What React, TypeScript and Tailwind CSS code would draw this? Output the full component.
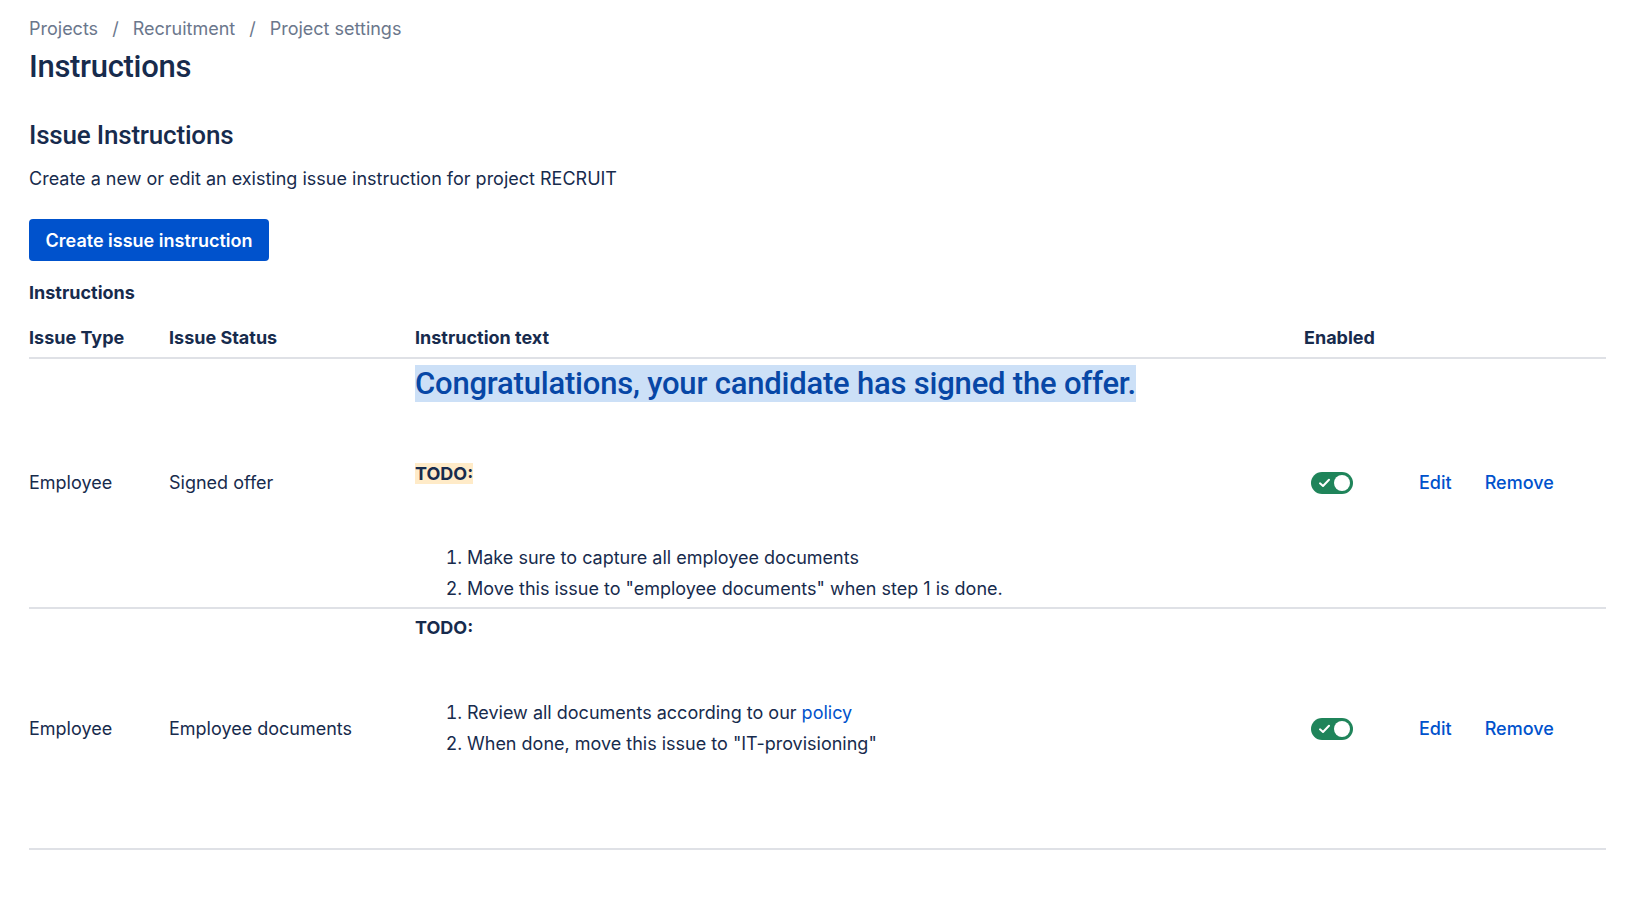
import React from "react";

const Toggle = () => (
  <div className="relative ml-[7px] flex h-[22px] w-[42px] items-center rounded-full bg-[#1f845a]">
    <svg
      className="absolute left-[7px] top-[5px]"
      width="13"
      height="12"
      viewBox="0 0 13 12"
      fill="none"
    >
      <path
        d="M2 6.3 L5 9 L11 2.8"
        stroke="white"
        strokeWidth="2"
        strokeLinecap="round"
        strokeLinejoin="round"
      />
    </svg>
    <span className="absolute right-[3px] top-[3px] h-[16px] w-[16px] rounded-full bg-white"></span>
  </div>
);

const Actions = () => (
  <div className="flex items-center gap-[33px] text-[18px] font-medium text-[#0052cc]">
    <a className="cursor-pointer">Edit</a>
    <a className="cursor-pointer">Remove</a>
  </div>
);

const headingFont = { fontFamily: "Roboto, 'Liberation Sans', sans-serif" };

const App = () => {
  return (
    <div
      className="min-h-screen bg-white pl-[29px] pr-[41px] pt-[17px] text-[#172b4d]"
      style={{ fontFamily: "Inter, 'Liberation Sans', sans-serif" }}
    >
      <div className="flex items-center text-[18px] leading-[24px] text-[#6b778c]">
        <span>Projects</span>
        <span className="mx-[14px]">/</span>
        <span>Recruitment</span>
        <span className="mx-[14px]">/</span>
        <span>Project settings</span>
      </div>

      <h1
        className="mt-[8px] text-[31px] font-medium leading-[36px] tracking-[-0.3px]"
        style={headingFont}
      >
        Instructions
      </h1>

      <h2
        className="mt-[34px] text-[26px] font-medium leading-[32px] tracking-[-0.2px]"
        style={headingFont}
      >
        Issue Instructions
      </h2>

      <p className="mt-[16px] text-[18px] leading-[24px]">
        Create a new or edit an existing issue instruction for project RECRUIT
      </p>

      <button className="mt-[28px] flex h-[42px] w-[240px] items-center justify-center rounded-[4px] bg-[#0052cc] text-[18px] font-semibold text-white">
        Create issue instruction
      </button>

      <div className="mt-[20px] text-[18px] font-bold leading-[24px]">
        Instructions
      </div>

      <table className="mt-[21px] w-[1577px] table-fixed border-collapse text-[18px] leading-[24px]">
        <colgroup>
          <col className="w-[140px]" />
          <col className="w-[246px]" />
          <col className="w-[889px]" />
          <col className="w-[115px]" />
          <col />
        </colgroup>
        <thead>
          <tr className="border-b-2 border-[#dfe1e6] text-left">
            <th className="pb-[7px] font-bold">Issue Type</th>
            <th className="pb-[7px] font-bold">Issue Status</th>
            <th className="pb-[7px] font-bold">Instruction text</th>
            <th className="pb-[7px] font-bold">Enabled</th>
            <th className="pb-[7px]"></th>
          </tr>
        </thead>
        <tbody>
          <tr className="border-b-2 border-[#dfe1e6] align-middle">
            <td>Employee</td>
            <td>Signed offer</td>
            <td className="pb-[3px] pt-[7px] align-top">
              <div
                className="text-[31px] font-medium leading-[36px] tracking-[-0.2px] text-[#0747a6]"
                style={headingFont}
              >
                <span className="bg-[#cce0f7]">
                  Congratulations, your candidate has signed the offer.
                </span>
              </div>
              <p className="mt-[60px] font-bold">
                <span className="bg-[#ffebc8]">TODO:</span>
              </p>
              <ol className="mt-[56px] list-decimal pl-[52px] leading-[31px]">
                <li>Make sure to capture all employee documents</li>
                <li>
                  Move this issue to "employee documents" when step 1 is done.
                </li>
              </ol>
            </td>
            <td>
              <Toggle />
            </td>
            <td>
              <Actions />
            </td>
          </tr>
          <tr className="border-b-2 border-[#dfe1e6] align-middle">
            <td>Employee</td>
            <td>Employee documents</td>
            <td className="pb-[89px] pt-[7px] align-top">
              <p className="font-bold">TODO:</p>
              <ol className="mt-[57px] list-decimal pl-[52px] leading-[31px]">
                <li>
                  Review all documents according to our{" "}
                  <a className="text-[#0052cc]">policy</a>
                </li>
                <li>When done, move this issue to "IT-provisioning"</li>
              </ol>
            </td>
            <td>
              <Toggle />
            </td>
            <td>
              <Actions />
            </td>
          </tr>
        </tbody>
      </table>
    </div>
  );
};

export default App;
